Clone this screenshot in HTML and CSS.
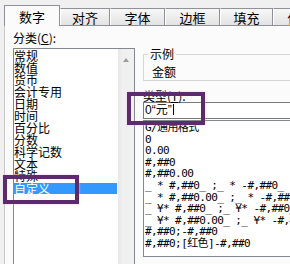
FILE: index.html
```html
<!doctype html>
<html lang="zh">
<head>
<meta charset="utf-8">
<title>设置单元格格式</title>
<link rel="stylesheet" href="styles.css">
</head>
<body>
<div class="dialog">

  <!-- tab strip -->
  <div class="tabs">
    <div class="tab active">数字</div>
    <div class="tab w50">对齐</div>
    <div class="tab">字体</div>
    <div class="tab">边框</div>
    <div class="tab w53">填充</div>
    <div class="tab">保护</div>
  </div>

  <div class="page">
    <div class="left">
      <div class="label">分类(<u>C</u>):</div>
      <div class="listbox">
        <div class="items">
          <div>常规</div>
          <div>数值</div>
          <div>货币</div>
          <div>会计专用</div>
          <div>日期</div>
          <div>时间</div>
          <div>百分比</div>
          <div>分数</div>
          <div>科学记数</div>
          <div>文本</div>
          <div>特殊</div>
          <div class="sel">自定义</div>
        </div>
        <div class="scroll"><span class="arrow"></span></div>
      </div>
    </div>

    <div class="right">
      <fieldset class="sample">
        <legend>示例</legend>
        <div>金额</div>
      </fieldset>
      <div class="label type">类型(<u>T</u>):</div>
      <div class="input">0“元”<span class="caret"></span></div>
      <div class="formats">
        <div>G/通用格式</div>
        <div>0</div>
        <div>0.00</div>
        <div>#,##0</div>
        <div>#,##0.00</div>
        <div>_ * #,##0_ ;_ * -#,##0_ ;_ * "-"_ ;_ @_ </div>
        <div>_ * #,##0.00_ ;_ * -#,##0.00_ ;_ * "-"??_ ;_ @_ </div>
        <div>_ ¥* #,##0_ ;_ ¥* -#,##0_ ;_ ¥* "-"_ ;_ @_ </div>
        <div>_ ¥* #,##0.00_ ;_ ¥* -#,##0.00_ ;_ ¥* "-"??_ ;_ @_ </div>
        <div>#,##0;-#,##0</div>
        <div>#,##0;[红色]-#,##0</div>
      </div>
    </div>
  </div>

  <!-- purple highlight marks drawn over the dialog -->
  <div class="mark mark1"></div>
  <div class="mark mark2"></div>
</div>
</body>
</html>
```

FILE: styles.css
```css
body {
  margin: 0;
  background: #f0f0f0;
  font-family: "Noto Sans CJK SC", sans-serif;
  font-size: 12px;
  color: #000;
}
.dialog {
  position: relative;
  width: 290px;
  height: 264px;
  overflow: hidden;
}

/* tabs */
.tabs {
  display: flex;
  align-items: flex-end;
  height: 25px;
  padding-left: 4px;
}
.tab {
  flex: none;
  box-sizing: border-box;
  width: 55px;
  height: 17px;
  padding-top: 1px;
  border: 1px solid #8e9198;
  border-bottom: none;
  border-left-color: #fff;
  background: linear-gradient(#f7f7f7, #e3e3e3);
  font-size: 13px;
  line-height: 15px;
  text-align: center;
}
.tab.w50 { width: 50px; }
.tab.w53 { width: 53px; }
.tab.active {
  position: relative;
  z-index: 1;
  width: 56px;
  height: 21px;
  margin-bottom: -1px;
  padding-top: 3px;
  border-left-color: #8e9198;
  background: #fbfbfb;
}

/* page */
.page {
  display: flex;
  gap: 8px;
  height: 300px;
  margin-left: 4px;
  padding: 5px 0 0 8px;
  border-top: 1px solid #8e9198;
  border-left: 1px solid #c8c8c8;
  background: #fbfbfb;
}
.label {
  line-height: 14px;
  white-space: nowrap;
}
.left {
  flex: none;
  width: 122px;
}
.listbox {
  display: flex;
  margin-top: 3px;
  height: 240px;
  border: 1px solid #828790;
  background: #fff;
}
.items {
  flex: 1;
  padding-top: 1px;
  line-height: 12px;
}
.items .sel {
  margin-top: 1px;
  height: 11px;
  line-height: 11px;
  background: #3399ff;
  color: #fff;
}
.scroll {
  width: 16px;
  border-left: 1px solid #fff;
  background: linear-gradient(90deg, #e8e8e8, #f0f0f0 30%, #f0f0f0);
}
.arrow {
  display: block;
  width: 0;
  height: 0;
  margin: 9px auto 0;
  border: 3px solid transparent;
  border-top: none;
  border-bottom: 4px solid #9a9a9a;
}

.right {
  flex: 1;
  min-width: 0;
}
.sample {
  margin: 16px -10px 0 0;
  padding: 4px 0 1px 8px;
  border: 1px solid #d6d6d6;
  border-right: none;
}
.sample legend {
  margin-left: -4px;
  padding: 0 2px;
  line-height: 14px;
}
.sample div {
  line-height: 14px;
}
.type {
  margin-top: 8px;
  line-height: 13px;
}
.input {
  box-sizing: border-box;
  height: 17px;
  margin-bottom: 1px;
  padding-left: 1px;
  border: 1px solid #7a7a7a;
  border-right: none;
  background: #fff;
  font-family: "Liberation Sans", "Noto Sans CJK SC", sans-serif;
  line-height: 15px;
}
.caret {
  display: inline-block;
  width: 1px;
  height: 11px;
  margin-left: 1px;
  vertical-align: -1px;
  background: #000;
}
.formats {
  height: 134px;
  padding: 1px 0 0 1px;
  border: 1px solid #828790;
  border-right: none;
  background: #fff;
  font-family: "DejaVu Sans Mono", "Noto Sans CJK SC", monospace;
  font-size: 11px;
  letter-spacing: -0.6px;
  line-height: 11.6px;
  overflow: hidden;
}
.formats div {
  height: 11.6px;
  white-space: pre;
}

/* annotation boxes */
.mark {
  position: absolute;
  z-index: 5;
  border: 4px solid #5c2a6e;
  box-shadow: 0 0 2px #f3c8f3;
}
.mark1 {
  left: 127px;
  top: 92px;
  width: 70px;
  height: 25px;
}
.mark2 {
  left: 3px;
  top: 175px;
  width: 68px;
  height: 21px;
}
```
